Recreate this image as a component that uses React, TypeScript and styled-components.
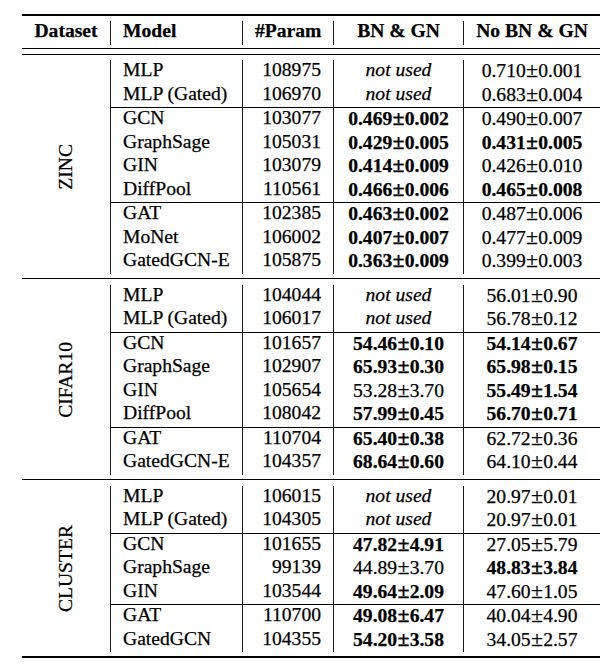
import React from "react";
import styled, { createGlobalStyle } from "styled-components";

const GlobalStyle = createGlobalStyle`
  html, body { margin: 0; padding: 0; background: #ffffff; }
  body {
    font-family: "Liberation Serif", "Times New Roman", serif;
    color: #000000;
    font-size: 19.6px;
    -webkit-text-stroke: 0.25px #000000;
  }
`;

type Val = { v: string; e: string; b?: boolean } | null;
type Row = { model: string; params: string; bn: Val; nobn: Val };
type Dataset = { name: string; groups: Row[][] };

const r = (v: string, e: string, b = false): Val => ({ v, e, b });

const DATA: Dataset[] = [
  {
    name: "ZINC",
    groups: [
      [
        { model: "MLP", params: "108975", bn: null, nobn: r("0.710", "0.001") },
        { model: "MLP (Gated)", params: "106970", bn: null, nobn: r("0.683", "0.004") },
      ],
      [
        { model: "GCN", params: "103077", bn: r("0.469", "0.002", true), nobn: r("0.490", "0.007") },
        { model: "GraphSage", params: "105031", bn: r("0.429", "0.005", true), nobn: r("0.431", "0.005", true) },
        { model: "GIN", params: "103079", bn: r("0.414", "0.009", true), nobn: r("0.426", "0.010") },
        { model: "DiffPool", params: "110561", bn: r("0.466", "0.006", true), nobn: r("0.465", "0.008", true) },
      ],
      [
        { model: "GAT", params: "102385", bn: r("0.463", "0.002", true), nobn: r("0.487", "0.006") },
        { model: "MoNet", params: "106002", bn: r("0.407", "0.007", true), nobn: r("0.477", "0.009") },
        { model: "GatedGCN-E", params: "105875", bn: r("0.363", "0.009", true), nobn: r("0.399", "0.003") },
      ],
    ],
  },
  {
    name: "CIFAR10",
    groups: [
      [
        { model: "MLP", params: "104044", bn: null, nobn: r("56.01", "0.90") },
        { model: "MLP (Gated)", params: "106017", bn: null, nobn: r("56.78", "0.12") },
      ],
      [
        { model: "GCN", params: "101657", bn: r("54.46", "0.10", true), nobn: r("54.14", "0.67", true) },
        { model: "GraphSage", params: "102907", bn: r("65.93", "0.30", true), nobn: r("65.98", "0.15", true) },
        { model: "GIN", params: "105654", bn: r("53.28", "3.70"), nobn: r("55.49", "1.54", true) },
        { model: "DiffPool", params: "108042", bn: r("57.99", "0.45", true), nobn: r("56.70", "0.71", true) },
      ],
      [
        { model: "GAT", params: "110704", bn: r("65.40", "0.38", true), nobn: r("62.72", "0.36") },
        { model: "GatedGCN-E", params: "104357", bn: r("68.64", "0.60", true), nobn: r("64.10", "0.44") },
      ],
    ],
  },
  {
    name: "CLUSTER",
    groups: [
      [
        { model: "MLP", params: "106015", bn: null, nobn: r("20.97", "0.01") },
        { model: "MLP (Gated)", params: "104305", bn: null, nobn: r("20.97", "0.01") },
      ],
      [
        { model: "GCN", params: "101655", bn: r("47.82", "4.91", true), nobn: r("27.05", "5.79") },
        { model: "GraphSage", params: "99139", bn: r("44.89", "3.70"), nobn: r("48.83", "3.84", true) },
        { model: "GIN", params: "103544", bn: r("49.64", "2.09", true), nobn: r("47.60", "1.05") },
      ],
      [
        { model: "GAT", params: "110700", bn: r("49.08", "6.47", true), nobn: r("40.04", "4.90") },
        { model: "GatedGCN", params: "104355", bn: r("54.20", "3.58", true), nobn: r("34.05", "2.57") },
      ],
    ],
  },
];

const Page = styled.div`
  width: 578px;
  padding: 13.5px 0 0 22px;
`;

const Table = styled.div`
  display: flex;
  flex-direction: column;
  width: 578px;
`;

const Rule = styled.div<{ $weight: number }>`
  height: ${(p) => p.$weight}px;
  background: #000000;
`;

const DoubleRule = styled.div`
  height: 7px;
  box-sizing: border-box;
  border-top: 1px solid #000000;
  border-bottom: 1px solid #000000;
`;

const HeaderBand = styled.div`
  padding: 5.5px 0 3px;
`;

const HeaderRow = styled.div`
  display: grid;
  grid-template-columns: 88px 132px 91px 130px 137px;
  font-weight: bold;
`;

const Section = styled.section`
  display: grid;
  grid-template-columns: 88px 490px;
  padding: 5.5px 0 4px;
`;

const LabelCell = styled.div`
  display: flex;
  align-items: center;
  justify-content: center;
`;

const Vertical = styled.span`
  writing-mode: vertical-rl;
  transform: rotate(180deg);
  line-height: 19.6px;
  white-space: nowrap;
`;

const Rows = styled.div`
  display: flex;
  flex-direction: column;
`;

const BodyRow = styled.div`
  display: grid;
  grid-template-columns: 132px 91px 130px 137px;
`;

const Cline = styled.div`
  height: 1px;
  background: #000000;
`;

const Cell = styled.div<{ $align: "left" | "right" | "center"; $bar?: boolean }>`
  box-sizing: border-box;
  height: 23.5px;
  line-height: 19.5px;
  padding: 0 12px 4px;
  text-align: ${(p) => p.$align};
  border-left: ${(p) => (p.$bar ? "1px solid #1a1a1a" : "none")};
  white-space: nowrap;
`;

const Num = styled.span<{ $bold?: boolean }>`
  font-weight: ${(p) => (p.$bold ? "bold" : "normal")};
`;

const Pm = styled.span`
  font-size: 1.12em;
  margin: 0 0.01em;
`;

const NotUsed = styled.span`
  font-style: italic;
`;

function Value({ val }: { val: Val }) {
  if (!val) return <NotUsed>not used</NotUsed>;
  return (
    <Num $bold={val.b}>
      {val.v}
      <Pm>±</Pm>
      {val.e}
    </Num>
  );
}

export default function App() {
  return (
    <Page>
      <GlobalStyle />
      <Table>
        <Rule $weight={2} />
        <HeaderBand>
          <HeaderRow>
            <Cell $align="center">Dataset</Cell>
            <Cell $align="left" $bar>
              Model
            </Cell>
            <Cell $align="right" $bar>
              #Param
            </Cell>
            <Cell $align="center" $bar>
              BN &amp; GN
            </Cell>
            <Cell $align="center" $bar>
              No BN &amp; GN
            </Cell>
          </HeaderRow>
        </HeaderBand>
        <DoubleRule />
        {DATA.map((ds, di) => (
          <React.Fragment key={ds.name}>
            {di > 0 && <Rule $weight={1.5} />}
            <Section>
              <LabelCell>
                <Vertical>{ds.name}</Vertical>
              </LabelCell>
              <Rows>
                {ds.groups.map((g, gi) => (
                  <React.Fragment key={gi}>
                    {gi > 0 && <Cline />}
                    {g.map((row) => (
                      <BodyRow key={row.model}>
                        <Cell $align="left" $bar>
                          {row.model}
                        </Cell>
                        <Cell $align="right" $bar>
                          {row.params}
                        </Cell>
                        <Cell $align="center" $bar>
                          <Value val={row.bn} />
                        </Cell>
                        <Cell $align="center" $bar>
                          <Value val={row.nobn} />
                        </Cell>
                      </BodyRow>
                    ))}
                  </React.Fragment>
                ))}
              </Rows>
            </Section>
          </React.Fragment>
        ))}
        <Rule $weight={2} />
      </Table>
    </Page>
  );
}
